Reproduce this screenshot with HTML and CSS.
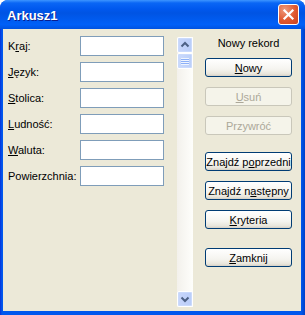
FILE: index.html
```html
<!DOCTYPE html>
<html>
<head>
<title>Arkusz1</title>
<meta charset="utf-8">
<link rel="stylesheet" href="styles.css">
</head>
<body>

<div class="window">
	<div class="titlebar">
		<span class="title">Arkusz1</span>
		<span class="close">
			<svg width="19" height="19" viewBox="0 0 19 19"><path d="M5.5 5.5 L13.5 13.5 M13.5 5.5 L5.5 13.5" stroke="#fff" stroke-width="2.2" stroke-linecap="square"/></svg>
		</span>
	</div>

	<div class="client">
		<!-- field names and their values -->
		<div class="fields">
			<label>K<u>r</u>aj:</label><input type="text">
			<label><u>J</u>ęzyk:</label><input type="text">
			<label><u>S</u>tolica:</label><input type="text">
			<label><u>L</u>udność:</label><input type="text">
			<label><u>W</u>aluta:</label><input type="text">
			<label>Powierzchnia:</label><input type="text">
		</div>

		<div class="scrollbar">
			<div class="sb-btn">
				<svg width="14" height="14" viewBox="0 0 14 14"><path d="M3.5 8.5 L7 5 L10.5 8.5" fill="none" stroke="#4D6185" stroke-width="2"/></svg>
			</div>
			<div class="sb-thumb">
				<div class="grip"></div>
			</div>
			<div class="sb-track"></div>
			<div class="sb-btn">
				<svg width="14" height="14" viewBox="0 0 14 14"><path d="M3.5 5.5 L7 9 L10.5 5.5" fill="none" stroke="#4D6185" stroke-width="2"/></svg>
			</div>
		</div>

		<div class="actions">
			<div class="caption">Nowy rekord</div>
			<button class="btn"><u>N</u>owy</button>
			<button class="btn" disabled><u>U</u>suń</button>
			<button class="btn" disabled>Przywróć</button>
			<button class="btn group">Znajdź p<u>o</u>przedni</button>
			<button class="btn">Znajdź n<u>a</u>stępny</button>
			<button class="btn"><u>K</u>ryteria</button>
			<button class="btn last"><u>Z</u>amknij</button>
		</div>
	</div>
</div>

</body>
</html>
```

FILE: styles.css
```css
html, body {
	margin: 0;
	padding: 0;
}
body {
	width: 305px;
	height: 315px;
	background: #fff;
	font: 11px "Liberation Sans", Arial, sans-serif;
	color: #000;
}

.window {
	width: 305px;
	height: 315px;
	display: flex;
	flex-direction: column;
	background: linear-gradient(to right, #0831D9, #0058EE 2px, #0058EE 301px, #0040C8);
	border-radius: 8px 8px 0 0;
	overflow: hidden;
}

.titlebar {
	height: 29px;
	flex: none;
	display: flex;
	align-items: center;
	justify-content: space-between;
	padding: 0 6px 0 7px;
	background: linear-gradient(#3D95FF 0, #0A66F5 3px, #0058EE 9px, #0054E3 45%, #0060F8 85%, #0052E0 100%);
}
.title {
	color: #fff;
	font: bold 13px "Liberation Sans", Arial, sans-serif;
	text-shadow: 1px 1px #0A1E8F;
	padding-top: 1px;
}
.close {
	width: 21px;
	height: 21px;
	box-sizing: border-box;
	border: 1px solid #fff;
	border-radius: 3px;
	background: radial-gradient(circle at 30% 25%, #EE9A7C, #E0582F 55%, #C9421F);
	display: flex;
	align-items: center;
	justify-content: center;
}

.client {
	flex: 1;
	margin: 0 4px 4px 3px;
	background: #ECE9D8;
	display: flex;
	align-items: flex-start;
}

.fields {
	display: grid;
	grid-template-columns: 72px 84px;
	row-gap: 6px;
	align-items: center;
	padding: 7px 0 0 5px;
}
.fields input {
	height: 20px;
	box-sizing: border-box;
	margin: 0;
	padding: 0 2px;
	border: 1px solid #7F9DB9;
	background: #fff;
	font: inherit;
	outline: none;
}

.scrollbar {
	width: 16px;
	height: 270px;
	margin: 8px 0 0 13px;
	display: flex;
	flex-direction: column;
	background: linear-gradient(to right, #F3F1EC, #FEFEFB);
}
.sb-btn, .sb-thumb {
	height: 16px;
	box-sizing: border-box;
	border: 1px solid #fff;
	border-radius: 2px;
	background: linear-gradient(to right, #C8D6FB, #B9CDF9);
	box-shadow: inset 0 0 0 1px #CADAFC;
	display: flex;
	align-items: center;
	justify-content: center;
}
.sb-thumb {
	height: 16px;
	background: linear-gradient(to right, #CBDAFC, #BBCFF9);
}
.grip {
	width: 8px;
	height: 7px;
	background: repeating-linear-gradient(#EEF4FE 0, #EEF4FE 1px, #8CB0F8 1px, #8CB0F8 2px);
}
.sb-track {
	flex: 1;
}

.actions {
	width: 87px;
	margin: 8px 0 0 12px;
	display: flex;
	flex-direction: column;
}
.caption {
	text-align: center;
	line-height: 13px;
	margin-bottom: 8px;
}
.btn {
	height: 19px;
	margin: 10px 0 0;
	padding: 0;
	border: 1px solid #003C74;
	border-radius: 3px;
	background: linear-gradient(#FFFFFF, #F5F4EF 60%, #E8E5DB 88%, #D6D0C5);
	font: inherit;
	color: #000;
	white-space: nowrap;
}
.btn:first-of-type {
	margin-top: 0;
}
.btn:disabled {
	border-color: #C9C7BA;
	background: #F5F4EA;
	color: #ACA899;
}
.btn.group {
	margin-top: 17px;
}
.btn.last {
	margin-top: 19px;
}
```
